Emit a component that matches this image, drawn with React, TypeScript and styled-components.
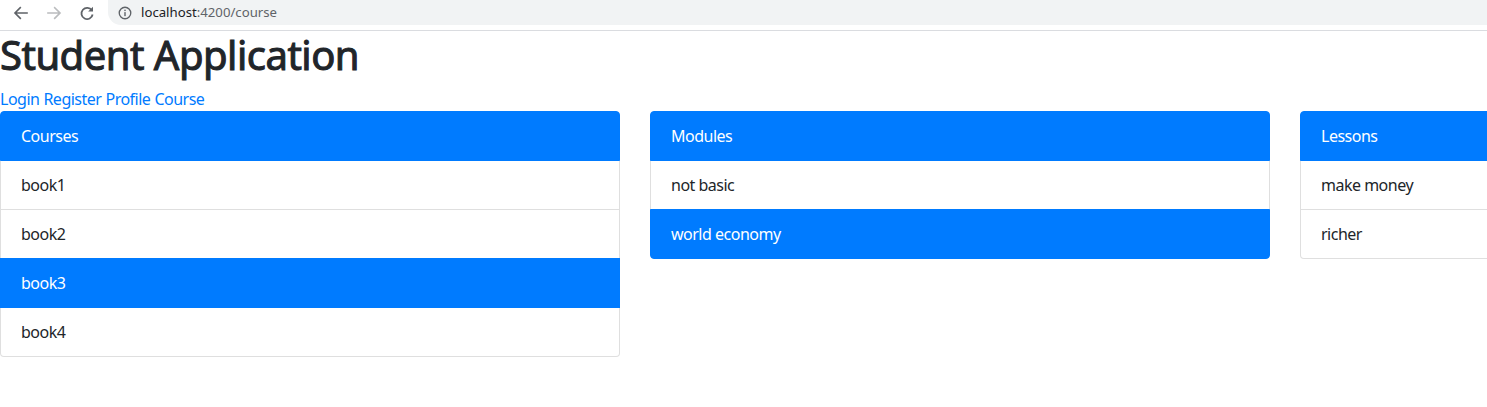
import React from "react";
import styled, { createGlobalStyle } from "styled-components";

const Global = createGlobalStyle`
  html, body { margin: 0; padding: 0; background: #fff; overflow: hidden; }
  body {
    font-family: "Noto Sans", "Open Sans", sans-serif;
    font-size: 16px;
    line-height: 1.5;
    color: #212529;
    letter-spacing: -0.5px;
  }
  * { box-sizing: border-box; }
`;

const BrowserBar = styled.div`
  height: 31px;
  border-bottom: 1px solid #dadce0;
  display: flex;
  align-items: flex-start;
  background: #fff;
  letter-spacing: 0;
`;

const NavButtons = styled.div`
  display: flex;
  align-items: center;
  height: 25px;
  padding-left: 12px;
  gap: 15px;
  width: 108px;
`;

const NavIcon = styled.svg<{ $dim?: boolean }>`
  width: 18px;
  height: 18px;
  color: ${(p) => (p.$dim ? "#babcbe" : "#5f6368")};
`;

const OmniTrack = styled.div`
  flex: 1;
  height: 25px;
  display: flex;
  align-items: center;
  background: #f1f3f4;
  border-radius: 0 0 0 13px;
  padding-left: 10px;
  gap: 9px;
  font-family: "Noto Sans", sans-serif;
  font-size: 13.2px;
`;

const Host = styled.span`
  color: #202124;
`;
const Path = styled.span`
  color: #5f6368;
`;

const Url = styled.div`
  white-space: nowrap;
  line-height: 1;
  margin-top: 1px;
`;

const Title = styled.h1`
  margin: 0 0 8px;
  font-family: "Noto Sans", sans-serif;
  font-size: 40px;
  font-weight: 400;
  line-height: 1.2;
  letter-spacing: -0.5px;
  -webkit-text-stroke: 1px #212529;
  color: #212529;
`;

const Nav = styled.nav`
  display: flex;
  gap: 4px;
  height: 24px;
`;

const NavLink = styled.a`
  color: #007bff;
  text-decoration: none;
  cursor: pointer;
`;

const Columns = styled.div`
  display: flex;
  align-items: flex-start;
  gap: 30px;
  width: max-content;
`;

const Card = styled.div`
  width: 620px;
  display: flex;
  flex-direction: column;
`;

const Item = styled.div<{ $active?: boolean }>`
  padding: 12px 20px;
  line-height: 24px;
  background: ${(p) => (p.$active ? "#007bff" : "#fff")};
  color: ${(p) => (p.$active ? "#fff" : "#212529")};
  border: 1px solid ${(p) => (p.$active ? "#007bff" : "rgba(0, 0, 0, 0.125)")};
  margin-bottom: -1px;
  position: relative;
  z-index: ${(p) => (p.$active ? 2 : 1)};
  &:first-child { border-radius: 4px 4px 0 0; }
  &:last-child { border-radius: 0 0 4px 4px; margin-bottom: 0; }
`;

const BackIcon = ({ dim }: { dim?: boolean }) => (
  <NavIcon $dim={dim} viewBox="0 0 24 24" fill="none" stroke="currentColor" strokeWidth="2.2" strokeLinecap="square">
    <path d="M20 12H5M11 5l-7 7 7 7" />
  </NavIcon>
);
const FwdIcon = ({ dim }: { dim?: boolean }) => (
  <NavIcon $dim={dim} viewBox="0 0 24 24" fill="none" stroke="currentColor" strokeWidth="2.2" strokeLinecap="square">
    <path d="M4 12h15M13 5l7 7-7 7" />
  </NavIcon>
);
const ReloadIcon = () => (
  <NavIcon viewBox="0 0 24 24" fill="none" stroke="currentColor" strokeWidth="2.4">
    <path d="M18.4 8.5A7.5 7.5 0 1 0 19.5 14" />
    <path d="M20 3.5V10h-6.5z" fill="currentColor" stroke="none" />
  </NavIcon>
);
const InfoIcon = () => (
  <svg width="14" height="14" viewBox="0 0 16 16" style={{ color: "#5f6368" }}>
    <circle cx="8" cy="8" r="6.6" fill="none" stroke="currentColor" strokeWidth="1.5" />
    <rect x="7.2" y="7" width="1.6" height="4.6" fill="currentColor" />
    <rect x="7.2" y="4.2" width="1.6" height="1.6" fill="currentColor" />
  </svg>
);

type Row = { label: string; active?: boolean };
const columns: { title: string; rows: Row[] }[] = [
  {
    title: "Courses",
    rows: [{ label: "book1" }, { label: "book2" }, { label: "book3", active: true }, { label: "book4" }],
  },
  { title: "Modules", rows: [{ label: "not basic" }, { label: "world economy", active: true }] },
  { title: "Lessons", rows: [{ label: "make money" }, { label: "richer" }] },
];

export default function App() {
  return (
    <>
      <Global />
      <BrowserBar>
        <NavButtons>
          <BackIcon />
          <FwdIcon dim />
          <ReloadIcon />
        </NavButtons>
        <OmniTrack>
          <InfoIcon />
          <Url>
            <Host>localhost</Host>
            <Path>:4200/course</Path>
          </Url>
        </OmniTrack>
      </BrowserBar>
      <Title>Student Application</Title>
      <Nav>
        <NavLink>Login</NavLink>
        <NavLink>Register</NavLink>
        <NavLink>Profile</NavLink>
        <NavLink>Course</NavLink>
      </Nav>
      <Columns>
        {columns.map((c) => (
          <Card key={c.title}>
            <Item $active>{c.title}</Item>
            {c.rows.map((r) => (
              <Item key={r.label} $active={r.active}>
                {r.label}
              </Item>
            ))}
          </Card>
        ))}
      </Columns>
    </>
  );
}
